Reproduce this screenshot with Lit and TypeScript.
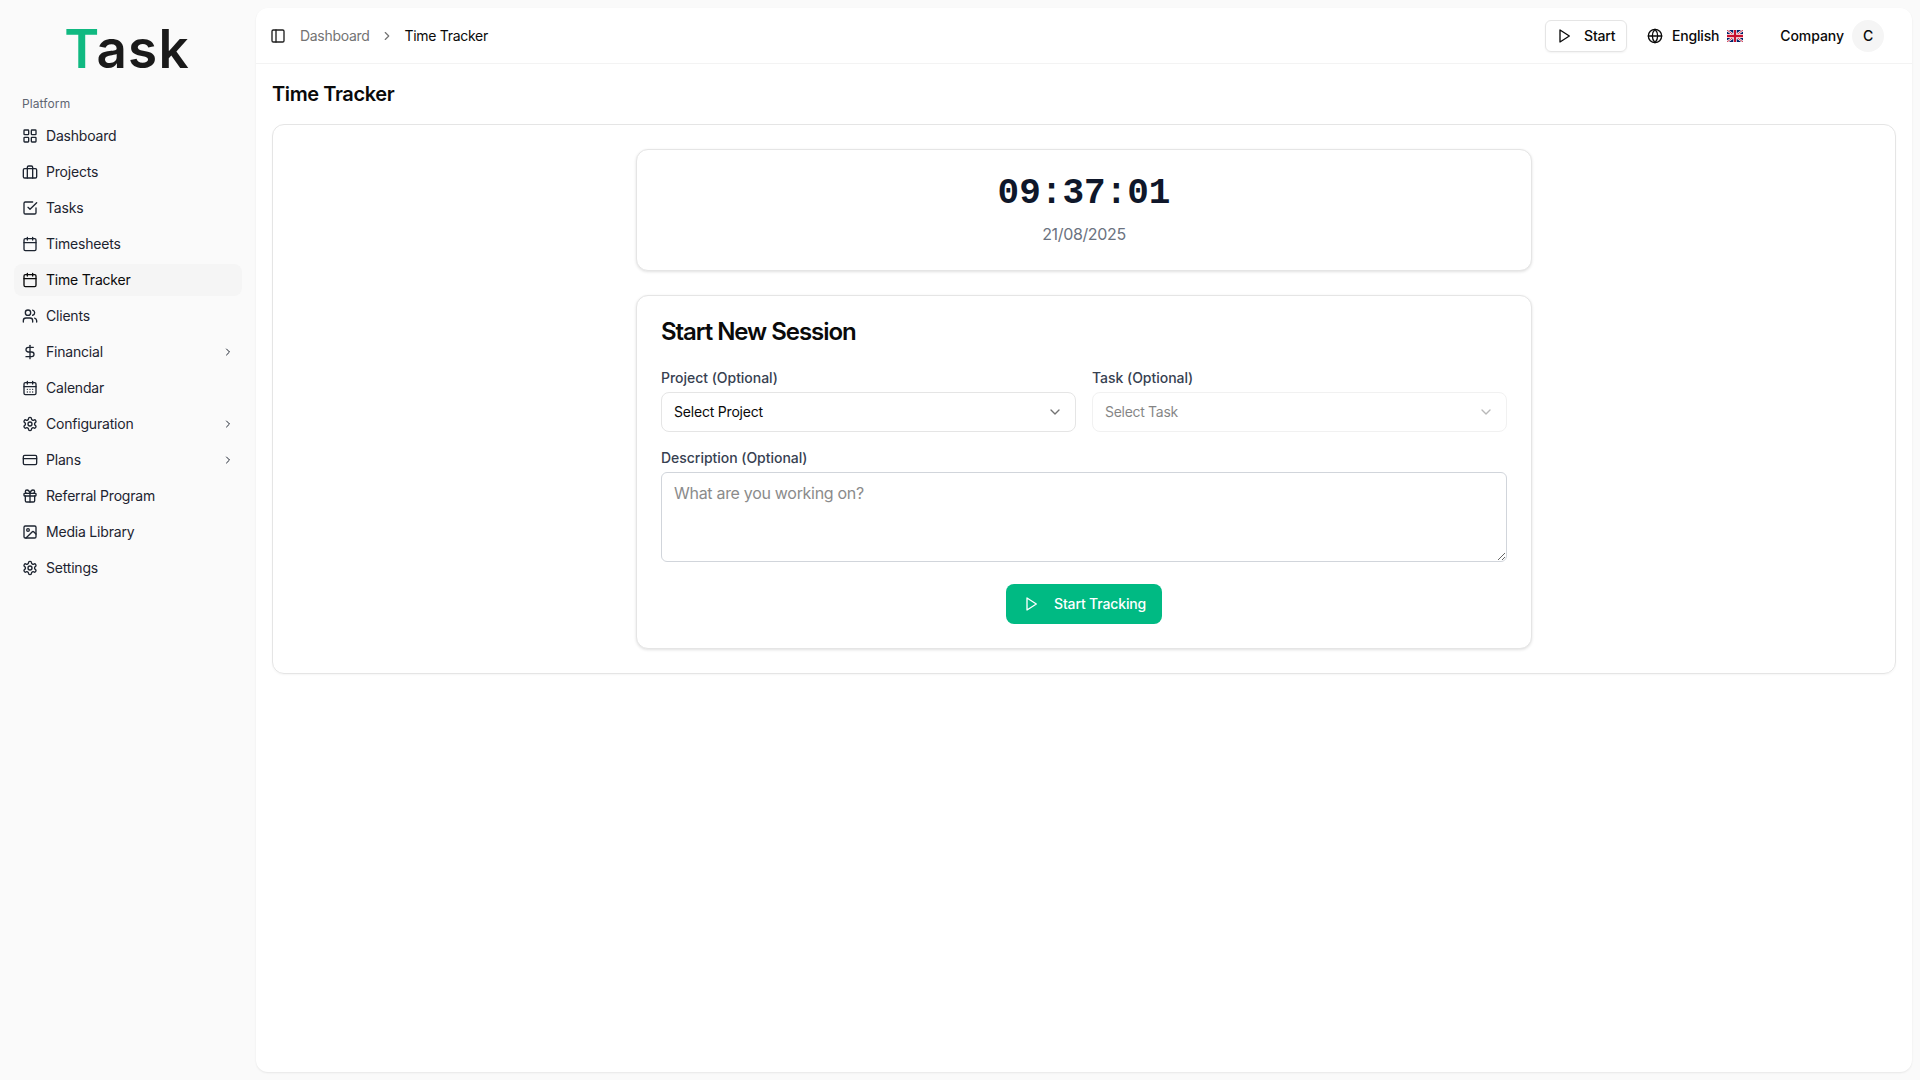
import { LitElement, html, css, svg } from "lit";
import { customElement } from "lit/decorators.js";

const I: Record<string, any> = {
  grid: svg`<rect width="7" height="7" x="3" y="3" rx="1"/><rect width="7" height="7" x="14" y="3" rx="1"/><rect width="7" height="7" x="14" y="14" rx="1"/><rect width="7" height="7" x="3" y="14" rx="1"/>`,
  brief: svg`<rect width="20" height="14" x="2" y="7" rx="2"/><path d="M16 21V5a2 2 0 0 0-2-2h-4a2 2 0 0 0-2 2v16"/>`,
  check: svg`<polyline points="9 11 12 14 22 4"/><path d="M21 12v7a2 2 0 0 1-2 2H5a2 2 0 0 1-2-2V5a2 2 0 0 1 2-2h11"/>`,
  cal: svg`<rect width="18" height="18" x="3" y="4" rx="2"/><path d="M16 2v4M8 2v4M3 10h18"/>`,
  users: svg`<path d="M16 21v-2a4 4 0 0 0-4-4H6a4 4 0 0 0-4 4v2"/><circle cx="9" cy="7" r="4"/><path d="M22 21v-2a4 4 0 0 0-3-3.87"/><path d="M16 3.13a4 4 0 0 1 0 7.75"/>`,
  dollar: svg`<line x1="12" x2="12" y1="2" y2="22"/><path d="M17 5H9.5a3.5 3.5 0 0 0 0 7h5a3.5 3.5 0 0 1 0 7H6"/>`,
  days: svg`<rect width="18" height="18" x="3" y="4" rx="2"/><path d="M16 2v4M8 2v4M3 10h18M8 14h.01M12 14h.01M16 14h.01M8 18h.01M12 18h.01M16 18h.01"/>`,
  gear: svg`<path d="M12.22 2h-.44a2 2 0 0 0-2 2v.18a2 2 0 0 1-1 1.73l-.43.25a2 2 0 0 1-2 0l-.15-.08a2 2 0 0 0-2.73.73l-.22.38a2 2 0 0 0 .73 2.73l.15.1a2 2 0 0 1 1 1.72v.51a2 2 0 0 1-1 1.74l-.15.09a2 2 0 0 0-.73 2.73l.22.38a2 2 0 0 0 2.73.73l.15-.08a2 2 0 0 1 2 0l.43.25a2 2 0 0 1 1 1.73V20a2 2 0 0 0 2 2h.44a2 2 0 0 0 2-2v-.18a2 2 0 0 1 1-1.73l.43-.25a2 2 0 0 1 2 0l.15.08a2 2 0 0 0 2.73-.73l.22-.39a2 2 0 0 0-.73-2.73l-.15-.08a2 2 0 0 1-1-1.74v-.5a2 2 0 0 1 1-1.74l.15-.09a2 2 0 0 0 .73-2.73l-.22-.38a2 2 0 0 0-2.73-.73l-.15.08a2 2 0 0 1-2 0l-.43-.25a2 2 0 0 1-1-1.73V4a2 2 0 0 0-2-2z"/><circle cx="12" cy="12" r="3"/>`,
  card: svg`<rect width="20" height="14" x="2" y="5" rx="2"/><line x1="2" x2="22" y1="10" y2="10"/>`,
  gift: svg`<rect x="3" y="8" width="18" height="4" rx="1"/><path d="M12 8v13"/><path d="M19 12v7a2 2 0 0 1-2 2H7a2 2 0 0 1-2-2v-7"/><path d="M7.5 8a2.5 2.5 0 0 1 0-5A4.8 8 0 0 1 12 8a4.8 8 0 0 1 4.5-5 2.5 2.5 0 0 1 0 5"/>`,
  image: svg`<rect width="18" height="18" x="3" y="3" rx="2"/><circle cx="9" cy="9" r="2"/><path d="m21 15-3.086-3.086a2 2 0 0 0-2.828 0L6 21"/>`,
  panel: svg`<rect width="18" height="18" x="3" y="3" rx="2"/><path d="M9 3v18"/>`,
  play: svg`<polygon points="6 3 20 12 6 21 6 3"/>`,
  globe: svg`<circle cx="12" cy="12" r="10"/><path d="M12 2a14.5 14.5 0 0 0 0 20 14.5 14.5 0 0 0 0-20"/><path d="M2 12h20"/>`,
  right: svg`<path d="m9 18 6-6-6-6"/>`,
  down: svg`<path d="m6 9 6 6 6-6"/>`,
};

const icon = (n: string, cls = "ic") =>
  html`<svg class=${cls} viewBox="0 0 24 24" fill="none" stroke="currentColor" stroke-width="2" stroke-linecap="round" stroke-linejoin="round">${I[n]}</svg>`;

const NAV: [string, string, boolean?, boolean?][] = [
  ["grid", "Dashboard"],
  ["brief", "Projects"],
  ["check", "Tasks"],
  ["cal", "Timesheets"],
  ["cal", "Time Tracker", false, true],
  ["users", "Clients"],
  ["dollar", "Financial", true],
  ["days", "Calendar"],
  ["gear", "Configuration", true],
  ["card", "Plans", true],
  ["gift", "Referral Program"],
  ["image", "Media Library"],
  ["gear", "Settings"],
];

@customElement("app-root")
export class AppRoot extends LitElement {
  static styles = css`
    :host {
      display: flex;
      height: 100vh;
      background: #fafafa;
      color: #0a0a0a;
      font-family: Inter, "Liberation Sans", sans-serif;
      font-size: 14px;
      line-height: 20px;
      letter-spacing: -0.3px;
      overflow: hidden;
    }
    * { box-sizing: border-box; }
    .ic { width: 16px; height: 16px; flex: none; display: block; }
    .sidebar { width: 256px; flex: none; padding: 0 14px; }
    .logo {
      height: 88px;
      padding: 17px 2px 0 0;
      text-align: center;
      font-size: 53px;
      font-weight: 600;
      line-height: 64px;
      letter-spacing: 1.2px;
      color: #1a1a1a;
    }
    .logo b { color: #10b981; font-weight: 600; }
    .group { height: 24px; margin-top: 4px; padding-left: 8px; font-size: 12px; line-height: 24px; color: #5f6672; letter-spacing: 0.1px; }
    .nav { display: flex; flex-direction: column; gap: 4px; margin-top: 4px; letter-spacing: -0.2px; }
    .item {
      height: 32px;
      display: flex;
      align-items: center;
      gap: 8px;
      padding: 0 8px;
      border-radius: 8px;
      color: #1d2430;
    }
    .item.on { background: #f5f5f5; color: #0a0a0a; }
    .item .lbl { flex: 1; }
    .item .chev { width: 12px; height: 12px; }
    .main {
      flex: 1;
      margin: 8px 8px 8px 0;
      background: #fff;
      border-radius: 12px;
      box-shadow: 0 1px 2px rgba(0,0,0,.08);
      min-width: 0;
      display: flex;
      flex-direction: column;
    }
    .top {
      height: 56px;
      flex: none;
      display: flex;
      align-items: center;
      padding: 0 28px 0 14px;
      border-bottom: 1px solid #f3f3f3;
    }
    .trigger { color: #1f1f1f; margin-right: 14px; }
    .crumb { display: flex; align-items: center; gap: 10.5px; }
    .crumb .muted { color: #737373; }
    .crumb .ic { width: 14px; height: 14px; color: #737373; }
    .spacer { flex: 1; }
    .startbtn {
      width: 82px;
      height: 32px;
      display: flex;
      align-items: center;
      gap: 12px;
      padding-left: 10px;
      border: 1px solid #e5e5e5;
      border-radius: 6px;
      box-shadow: 0 1px 2px rgba(0,0,0,.05);
      font-weight: 500;
      letter-spacing: -0.2px;
    }
    .lang { display: flex; align-items: center; margin-left: 20px; gap: 8px; font-weight: 500; letter-spacing: -0.2px; }
    .lang .ic:first-child { margin-right: 1px; }
    .flag { width: 16px; height: 12px; display: block; }
    .company { margin-left: 37px; font-weight: 500; letter-spacing: -0.05px; }
    .avatar {
      width: 32px;
      height: 32px;
      margin-left: 8px;
      border-radius: 50%;
      background: #f5f5f5;
      display: flex;
      align-items: center;
      justify-content: center;
      font-weight: 500;
    }
    .page { padding: 16px; }
    h1 { margin: 0 0 16px; font-size: 20px; line-height: 28px; font-weight: 600; letter-spacing: -0.4px; }
    .outer { border: 1px solid #e5e5e5; border-radius: 12px; padding: 24px; box-shadow: 0 1px 2px rgba(0,0,0,.04); }
    .stack { width: 896px; margin: 0 auto; display: flex; flex-direction: column; gap: 24px; }
    .card { border: 1px solid #e5e5e5; border-radius: 12px; padding: 24px; box-shadow: 0 1px 3px rgba(0,0,0,.12); background: #fff; }
    .clock { text-align: center; }
    .time { font-family: "Liberation Mono", monospace; font-size: 36px; font-weight: 700; line-height: 40px; color: #0f172a; letter-spacing: 0; }
    .date { margin-top: 8px; font-size: 16px; line-height: 24px; color: #6b7280; letter-spacing: -0.35px; }
    h2 { margin: 0 0 24px; font-size: 24px; line-height: 24px; font-weight: 600; letter-spacing: -1.05px; }
    .row { display: grid; grid-template-columns: 1fr 1fr; gap: 16px; }
    label { display: block; font-weight: 500; color: #374151; margin-bottom: 4px; letter-spacing: -0.03px; }
    .select {
      height: 40px;
      display: flex;
      align-items: center;
      justify-content: space-between;
      padding: 0 12px;
      border: 1px solid #e5e5e5;
      border-radius: 8px;
      letter-spacing: -0.2px;
    }
    .select .ic { color: #737373; }
    .select.off { opacity: .5; letter-spacing: -0.3px; }
    .desc { margin-top: 16px; }
    textarea {
      display: block;
      width: 100%;
      height: 90px;
      padding: 8px 12px;
      border: 1px solid #d1d5db;
      border-radius: 6px;
      font: 16px/24px Inter, sans-serif;
      letter-spacing: -0.3px;
      color: #0a0a0a;
      outline: none;
      resize: vertical;
    }
    textarea::placeholder { color: #8b8b8b; }
    .actions { display: flex; justify-content: center; margin-top: 22px; }
    .go {
      width: 156px;
      height: 40px;
      display: flex;
      align-items: center;
      gap: 15px;
      padding-left: 17px;
      border-radius: 8px;
      background: #00ba83;
      color: #fff;
      font-weight: 500;
      letter-spacing: -0.15px;
    }
  `;

  render() {
    return html`
      <aside class="sidebar">
        <div class="logo"><b>T</b>ask</div>
        <div class="group">Platform</div>
        <nav class="nav">
          ${NAV.map(
            ([ic, t, chev, on]) => html`<div class="item ${on ? "on" : ""}">
              ${icon(ic)}<span class="lbl">${t}</span>${chev ? icon("right", "ic chev") : ""}
            </div>`
          )}
        </nav>
      </aside>
      <div class="main">
        <header class="top">
          ${icon("panel", "ic trigger")}
          <div class="crumb">
            <span class="muted">Dashboard</span>${icon("right")}<span>Time Tracker</span>
          </div>
          <div class="spacer"></div>
          <div class="startbtn">${icon("play")}<span>Start</span></div>
          <div class="lang">
            ${icon("globe")}<span>English</span>
            <svg class="flag" viewBox="0 0 60 40" preserveAspectRatio="none">
              <rect width="60" height="40" fill="#012169" />
              <path d="M0 0 60 40M60 0 0 40" stroke="#fff" stroke-width="8" />
              <path d="M0 0 60 40M60 0 0 40" stroke="#c8102e" stroke-width="3" />
              <path d="M30 0V40M0 20H60" stroke="#fff" stroke-width="13" />
              <path d="M30 0V40M0 20H60" stroke="#c8102e" stroke-width="8" />
            </svg>
          </div>
          <span class="company">Company</span>
          <div class="avatar">C</div>
        </header>
        <main class="page">
          <h1>Time Tracker</h1>
          <section class="outer">
            <div class="stack">
              <div class="card clock">
                <div class="time">09:37:01</div>
                <div class="date">21/08/2025</div>
              </div>
              <div class="card">
                <h2>Start New Session</h2>
                <div class="row">
                  <div>
                    <label>Project (Optional)</label>
                    <div class="select"><span>Select Project</span>${icon("down")}</div>
                  </div>
                  <div>
                    <label>Task (Optional)</label>
                    <div class="select off"><span>Select Task</span>${icon("down")}</div>
                  </div>
                </div>
                <div class="desc">
                  <label>Description (Optional)</label>
                  <textarea placeholder="What are you working on?"></textarea>
                </div>
                <div class="actions">
                  <div class="go">${icon("play")}<span>Start Tracking</span></div>
                </div>
              </div>
            </div>
          </section>
        </main>
      </div>
    `;
  }
}
